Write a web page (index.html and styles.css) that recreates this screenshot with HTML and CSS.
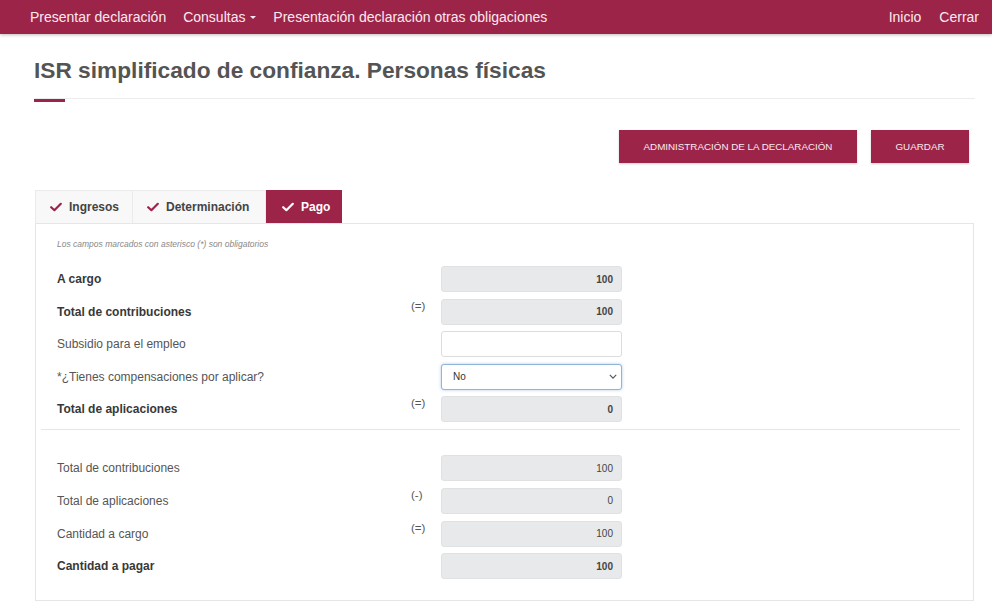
FILE: index.html
```html
<!DOCTYPE html>
<html lang="es">
<head>
<meta charset="utf-8">
<title>ISR simplificado de confianza. Personas físicas</title>
<link rel="stylesheet" href="styles.css">
</head>
<body>
<nav class="topbar">
  <ul class="menu">
    <li>Presentar declaración</li>
    <li>Consultas <span class="caret"></span></li>
    <li>Presentación declaración otras obligaciones</li>
  </ul>
  <ul class="menu menu-right">
    <li>Inicio</li>
    <li>Cerrar</li>
  </ul>
</nav>

<main class="page">
  <header class="page-head">
    <h1>ISR simplificado de confianza. Personas físicas</h1>
    <div class="rule"><span class="rule-accent"></span></div>
  </header>

  <div class="actions">
    <button class="btn">ADMINISTRACIÓN DE LA DECLARACIÓN</button>
    <button class="btn btn-small">GUARDAR</button>
  </div>

  <div class="tabs">
    <div class="tab tab-first"><svg class="check" viewBox="0 0 12 10"><path d="M1.2 5.2 4.4 8.2 10.8 1.8"/></svg>Ingresos</div>
    <div class="tab"><svg class="check" viewBox="0 0 12 10"><path d="M1.2 5.2 4.4 8.2 10.8 1.8"/></svg>Determinación</div>
    <div class="tab tab-active"><svg class="check" viewBox="0 0 12 10"><path d="M1.2 5.2 4.4 8.2 10.8 1.8"/></svg>Pago</div>
  </div>

  <section class="panel">
    <p class="note">Los campos marcados con asterisco (*) son obligatorios</p>

    <div class="form-grid">
      <div class="label strong">A cargo</div>
      <div class="op"></div>
      <div class="field readonly strong">100</div>

      <div class="label strong">Total de contribuciones</div>
      <div class="op">(=)</div>
      <div class="field readonly strong">100</div>

      <div class="label">Subsidio para el empleo</div>
      <div class="op"></div>
      <div class="field"></div>

      <div class="label">*¿Tienes compensaciones por aplicar?</div>
      <div class="op"></div>
      <div class="field select">No<svg class="chev" viewBox="0 0 10 6"><path d="M1 1l4 4 4-4"/></svg></div>

      <div class="label strong">Total de aplicaciones</div>
      <div class="op">(=)</div>
      <div class="field readonly strong">0</div>
    </div>

    <hr class="divider">

    <div class="form-grid">
      <div class="label">Total de contribuciones</div>
      <div class="op"></div>
      <div class="field readonly">100</div>

      <div class="label">Total de aplicaciones</div>
      <div class="op">(-)</div>
      <div class="field readonly">0</div>

      <div class="label">Cantidad a cargo</div>
      <div class="op">(=)</div>
      <div class="field readonly">100</div>

      <div class="label strong">Cantidad a pagar</div>
      <div class="op"></div>
      <div class="field readonly strong">100</div>
    </div>
  </section>
</main>
</body>
</html>
```

FILE: styles.css
```css
* { box-sizing: border-box; }

html, body {
  margin: 0;
  padding: 0;
  background: #fff;
  font-family: "Liberation Sans", Arial, Helvetica, sans-serif;
  color: #555;
}

/* Top navigation bar */
.topbar {
  height: 34px;
  background: #9d2449;
  display: flex;
  justify-content: space-between;
  align-items: center;
  padding: 0 13px 0 30px;
  box-shadow: 0 1px 3px rgba(0, 0, 0, 0.25);
}

.menu {
  list-style: none;
  margin: 0;
  padding: 0;
  display: flex;
  gap: 17px;
  color: #fbe9ef;
  font-size: 14px;
  line-height: 34px;
}

.menu-right { gap: 18px; }

.caret {
  display: inline-block;
  width: 0;
  height: 0;
  border-left: 3px solid transparent;
  border-right: 3px solid transparent;
  border-top: 3px solid #fbe9ef;
  vertical-align: middle;
  margin-left: 1px;
  margin-top: -2px;
}

/* Page container */
.page {
  padding: 0 17px 0 34px;
}

.page-head h1 {
  margin: 0;
  padding-top: 23px;
  font-size: 22.7px;
  line-height: 26px;
  font-weight: bold;
  color: #545454;
}

.rule {
  margin-top: 15px;
  height: 1px;
  background: #ececec;
  position: relative;
}

.rule-accent {
  position: absolute;
  left: 0;
  top: 1px;
  width: 31px;
  height: 3px;
  background: #9d2449;
}

/* Action buttons */
.actions {
  display: flex;
  justify-content: flex-end;
  gap: 14px;
  margin-top: 31px;
  padding-right: 6px;
}

.btn {
  height: 33px;
  width: 238px;
  border: none;
  background: #9d2449;
  color: #fbe9ef;
  font-family: "Liberation Sans", Arial, sans-serif;
  font-size: 9.8px;
  box-shadow: 0 1px 2px rgba(0, 0, 0, 0.2);
  padding: 0;
}

.btn-small { width: 98px; }

/* Tabs */
.tabs {
  display: flex;
  margin-top: 27px;
  padding-left: 1px;
}

.tab {
  height: 33px;
  display: flex;
  align-items: center;
  padding: 0 10px 0 14px;
  font-size: 12px;
  font-weight: bold;
  color: #444;
  background: #f8f8f8;
  border: 1px solid #ebebeb;
  border-bottom: none;
}

.tab-first { width: 98px; }
.tab:nth-child(2) { width: 133px; border-left: none; }
.tab-active {
  width: 76px;
  padding-left: 15px;
  background: #9d2449;
  color: #fff;
  border-color: #9d2449;
}

.check {
  flex-shrink: 0;
  width: 12px;
  height: 10px;
  margin-right: 7px;
  fill: none;
  stroke: #9d2449;
  stroke-width: 2.2;
  stroke-linecap: round;
  stroke-linejoin: round;
}

.tab-active .check { stroke: #fff; }

/* Panel */
.panel {
  margin-left: 1px;
  width: 939px;
  border: 1px solid #e6e6e6;
  padding: 14px 0 21px 21px;
}

.note {
  margin: 0 0 16px;
  font-size: 8.5px;
  font-style: italic;
  color: #888;
  line-height: 12px;
}

.form-grid {
  display: grid;
  grid-template-columns: 354px 30px 181px;
  row-gap: 6.6px;
  grid-auto-rows: 26px;
}

.label {
  font-size: 12px;
  color: #555;
  align-self: center;
}

.label.strong {
  font-weight: bold;
  color: #383838;
}

.op {
  font-size: 11.5px;
  color: #555;
  padding-top: 1px;
}

.field {
  border: 1px solid #dcdcdc;
  border-radius: 3px;
  background: #fff;
  font-size: 10px;
  display: flex;
  align-items: center;
  justify-content: flex-end;
  padding: 0 8px;
  color: #444;
}

.field.readonly {
  background: #e8e9eb;
  border-color: #e0e1e3;
}

.field.strong { font-weight: bold; }

.field.select {
  justify-content: space-between;
  padding: 0 4px 0 11px;
  border-color: #8fb6d8;
  box-shadow: 0 0 3px rgba(90, 150, 210, 0.5);
  color: #333;
}

.chev {
  width: 8px;
  height: 5px;
  fill: none;
  stroke: #555;
  stroke-width: 1.4;
}

.divider {
  margin: 7px 13px 25px -16px;
  border: none;
  border-top: 1px solid #e6e6e6;
}
```
